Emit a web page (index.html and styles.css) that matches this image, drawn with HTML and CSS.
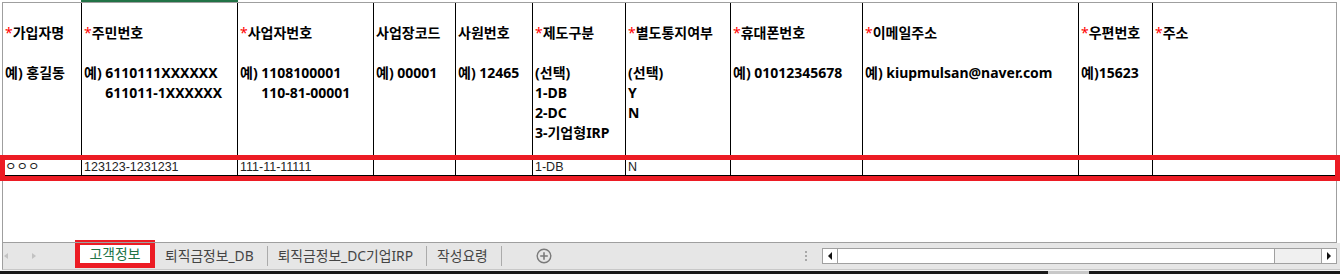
FILE: index.html
```html
<!DOCTYPE html>
<html lang="ko">
<head>
  <meta charset="utf-8">
  <title>고객정보</title>
  <link rel="stylesheet" href="styles.css">
</head>
<body>
  <!-- 열 머리글 선택 표시 -->
  <div class="colbar"><div class="colbar-sel"></div></div>

  <div class="sheet">
    <table class="grid">
      <tr>
        <th class="col-name">
          <div><span class="req">*</span>가입자명</div>
          <div class="ex">예) 홍길동</div>
        </th>
        <th class="col-rrn">
          <div><span class="req">*</span>주민번호</div>
          <div class="ex"><span>예)</span> <span class="ex-lines">6110111XXXXXX<br>611011-1XXXXXX</span></div>
        </th>
        <th class="col-biz">
          <div><span class="req">*</span>사업자번호</div>
          <div class="ex"><span>예)</span> <span class="ex-lines">1108100001<br>110-81-00001</span></div>
        </th>
        <th class="col-site">
          <div>사업장코드</div>
          <div class="ex">예) 00001</div>
        </th>
        <th class="col-emp">
          <div>사원번호</div>
          <div class="ex">예) 12465</div>
        </th>
        <th class="col-plan">
          <div><span class="req">*</span>제도구분</div>
          <div class="ex">(선택)<br>1-DB<br>2-DC<br>3-기업형IRP</div>
        </th>
        <th class="col-notice">
          <div><span class="req">*</span>별도통지여부</div>
          <div class="ex">(선택)<br>Y<br>N</div>
        </th>
        <th class="col-phone">
          <div><span class="req">*</span>휴대폰번호</div>
          <div class="ex">예) 01012345678</div>
        </th>
        <th class="col-mail">
          <div><span class="req">*</span>이메일주소</div>
          <div class="ex">예) kiupmulsan@naver.com</div>
        </th>
        <th class="col-zip">
          <div><span class="req">*</span>우편번호</div>
          <div class="ex">예)15623</div>
        </th>
        <th class="col-addr">
          <div><span class="req">*</span>주소</div>
        </th>
      </tr>
      <tr>
        <td>ㅇㅇㅇ</td>
        <td>123123-1231231</td>
        <td>111-11-11111</td>
        <td></td>
        <td></td>
        <td>1-DB</td>
        <td>N</td>
        <td></td>
        <td></td>
        <td></td>
        <td></td>
      </tr>
    </table>
    <!-- 입력 예시 행 강조 표시 -->
    <div class="mark-row"></div>
  </div>

  <div class="tabbar">
    <div class="sheet-nav">
      <span class="arrow-left"></span>
      <span class="arrow-right"></span>
    </div>
    <div class="tab-active">고객정보</div>
    <div class="tab">퇴직금정보_DB</div>
    <div class="tab">퇴직금정보_DC기업IRP</div>
    <div class="tab">작성요령</div>
    <svg class="add-sheet" width="16" height="16" viewBox="0 0 16 16">
      <circle cx="8" cy="8" r="6.8" fill="none" stroke="#7a7a7a" stroke-width="1.4"/>
      <path d="M8 4.2v7.6M4.2 8h7.6" stroke="#7a7a7a" stroke-width="1.6"/>
    </svg>
    <span class="splitter"></span>
    <div class="hscroll">
      <div class="sb-btn sb-left"><span class="tri-left"></span></div>
      <div class="sb-thumb"></div>
      <div class="sb-track"></div>
      <div class="sb-btn sb-right"><span class="tri-right"></span></div>
    </div>
  </div>
  <div class="status"><div class="status-thumb"></div></div>
</body>
</html>
```

FILE: styles.css
```css
*{
  box-sizing: border-box;
}
body{
  margin: 0;
  width: 1340px;
  height: 274px;
  overflow: hidden;
  background-color: #fff;
}

/* 위쪽 열 머리글 */
.colbar{
  height: 2px;
  padding-left: 81px;
}
.colbar-sel{
  width: 157px;
  height: 2px;
  background-color: #217346;
}

/* 시트 영역 */
.sheet{
  position: relative;
  margin-left: 2px;
  width: 1335px;
  height: 241px;
  border: 1px solid #9f9f9f;
}
.grid{
  border-collapse: separate;
  border-spacing: 0;
  table-layout: fixed;
  width: 1333px;
}
.grid th{
  height: 153px;
  padding: 20px 2px 0;
  vertical-align: top;
  text-align: left;
  font: bold 14px/20px "Noto Sans", "Noto Sans CJK KR", sans-serif;
  color: #000;
  white-space: nowrap;
  border-right: 1px solid #000;
  border-bottom: 1px solid #000;
}
.grid td{
  height: 20px;
  padding: 0 2px;
  vertical-align: bottom;
  font: 12.5px/15px "Liberation Sans", "Noto Sans CJK KR", sans-serif;
  color: #222;
  white-space: nowrap;
  border-right: 1px solid #000;
  border-bottom: 1px solid #000;
}
.grid th:last-child,
.grid td:last-child{
  border-right: 0;
}

.col-name{width: 79px;}
.col-rrn{width: 156px;}
.col-biz{width: 136px;}
.col-site{width: 82px;}
.col-emp{width: 77px;}
.col-plan{width: 93px;}
.col-notice{width: 105px;}
.col-phone{width: 132px;}
.col-mail{width: 216px;}
.col-zip{width: 74px;}
.col-addr{width: 183px;}

.req{color: #f00; font-weight: normal;}
.ex{margin-top: 20px;}
.ex-lines{
  display: inline-block;
  vertical-align: top;
}

.mark-row{
  position: absolute;
  left: -3px;
  top: 152px;
  width: 1340px;
  height: 26px;
  border: 5px solid #ec1c24;
}

/* 시트 탭 */
.tabbar{
  display: flex;
  align-items: center;
  height: 27px;
  margin-left: 2px;
  padding-right: 3px;
  border-left: 1px solid #9f9f9f;
  border-bottom: 1px solid #c8c8c8;
  background-color: #e6e6e6;
  font: 13.8px/20px "Noto Sans", "Noto Sans CJK KR", sans-serif;
  color: #444;
}
.sheet-nav{
  display: flex;
  align-items: center;
  gap: 24px;
  flex: none;
  width: 72px;
  padding-left: 1px;
}
.arrow-left{
  border-right: 4px solid #c2c2c2;
  border-top: 3.5px solid transparent;
  border-bottom: 3.5px solid transparent;
}
.arrow-right{
  border-left: 4px solid #c2c2c2;
  border-top: 3.5px solid transparent;
  border-bottom: 3.5px solid transparent;
}
.tab-active{
  align-self: flex-start;
  flex: none;
  margin-top: -3px;
  width: 80px;
  height: 28px;
  border: 5px solid #ec1c24;
  background-color: #fff;
  color: #217346;
  line-height: 18px;
  text-align: center;
}
.tab{
  flex: none;
  padding: 0 13px 0 10px;
  border-right: 1px solid #ababab;
  white-space: nowrap;
}
.add-sheet{
  flex: none;
  margin-left: 34px;
}
.splitter{
  flex: none;
  width: 2px;
  height: 10px;
  margin-left: auto;
  margin-right: 15px;
  background: linear-gradient(#a8a8a8 50%, transparent 50%) 0 0 / 2px 4px;
}

/* 가로 스크롤바 */
.hscroll{
  display: flex;
  flex: none;
  width: 515px;
  height: 16px;
  border: 1px solid #a0a0a0;
  background-color: #f0f0f0;
}
.sb-btn{
  display: flex;
  align-items: center;
  justify-content: center;
  width: 15px;
  background-color: #fff;
}
.sb-left{border-right: 1px solid #a0a0a0;}
.sb-right{border-left: 1px solid #a0a0a0;}
.sb-thumb{
  width: 437px;
  background-color: #fff;
  border-right: 1px solid #a0a0a0;
}
.sb-track{flex: 1;}
.tri-left{
  border-right: 4px solid #111;
  border-top: 4px solid transparent;
  border-bottom: 4px solid transparent;
}
.tri-right{
  border-left: 4px solid #111;
  border-top: 4px solid transparent;
  border-bottom: 4px solid transparent;
}

/* 아래 상태 표시줄 */
.status{
  height: 5px;
  border-top: 1px solid #f4f4f4;
  background-color: #1a1a1a;
}
.status-thumb{
  margin-left: 1048px;
  width: 41px;
  height: 4px;
  background-color: #c8c8c8;
}
```
